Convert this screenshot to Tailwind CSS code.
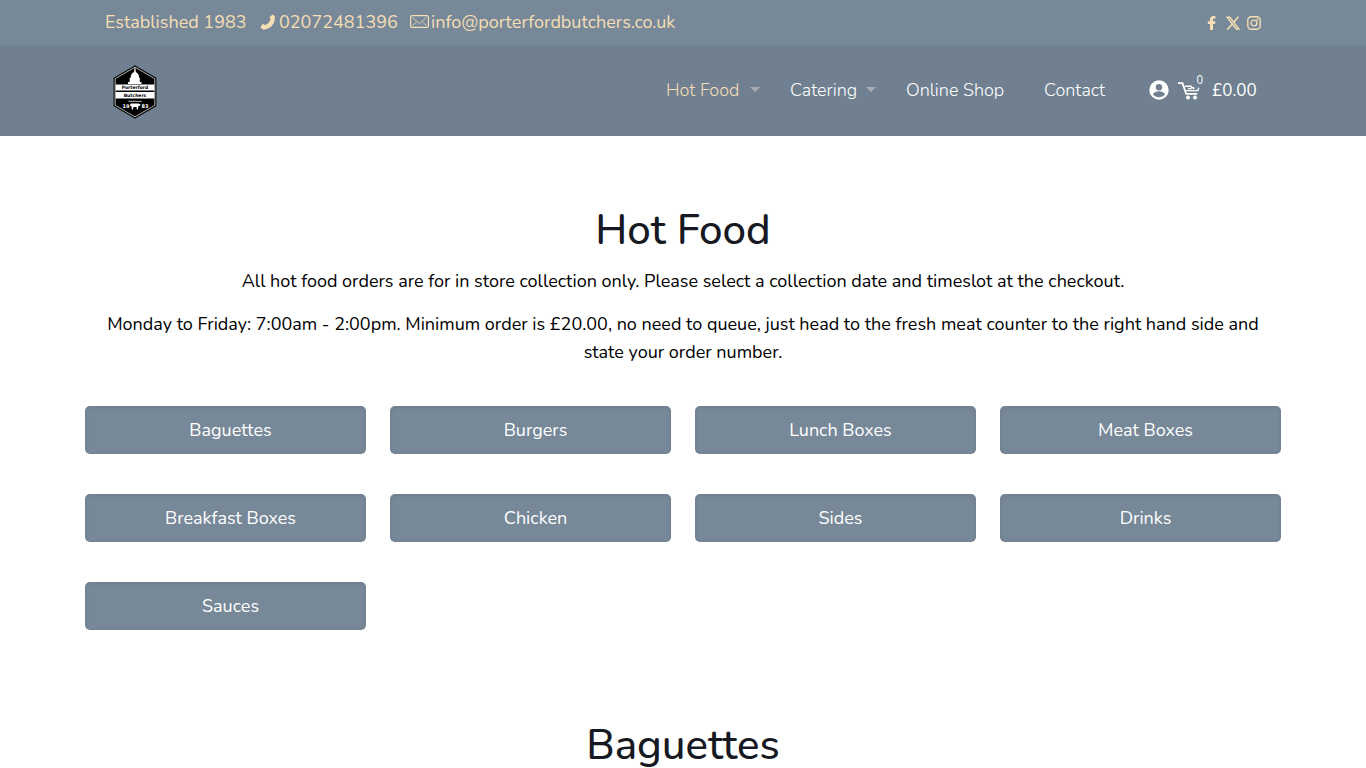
<!DOCTYPE html>
<html lang="en">
<head>
  <meta charset="UTF-8" />
  <meta name="viewport" content="width=device-width, initial-scale=1.0" />
  <title>Hot Food - Porterford Butchers</title>
  <script src="https://cdn.jsdelivr.net/npm/@tailwindcss/browser@4"></script>
</head>
<body class="bg-white font-['Nunito','Open_Sans',sans-serif] text-[18px] leading-7 text-black">
  <!-- Top bar -->
  <div class="bg-[#778899] text-[#f5deb3]">
    <div class="max-w-[1196px] mx-auto h-[45px] px-5 pb-[2px] flex items-center justify-between">
      <ul class="flex items-center gap-[10px]">
        <li class="w-[145px] whitespace-nowrap">Established 1983</li>
        <li>
          <a href="tel:02072481396" class="w-[140px] flex items-center gap-[3px] whitespace-nowrap">
            <svg class="w-4 h-4 shrink-0" viewBox="0 0 16 16" fill="currentColor"><path d="M12.3.8c.5-.3 1-.2 1.400.2l1.200 1.600c.3.500.2.900-.1 1.300.3 5.700-4.400 11-10.100 11.500-.4.400-1 .5-1.500.2L.9 14c-.4-.4-.5-.8-.2-1.300l1.500-2.200c.3-.4.7-.5 1.200-.3l1.600.9c2.600-.9 4.700-2.900 5.500-5.500l-.8-1.600c-.2-.5-.1-.9.300-1.200z"/></svg>
            <span>02072481396</span>
          </a>
        </li>
        <li>
          <a href="mailto:info@porterfordbutchers.co.uk" class="flex items-center gap-[2px] whitespace-nowrap">
            <svg class="w-[19px] h-[13px] shrink-0" viewBox="0 0 19 13" fill="none" stroke="currentColor"><rect x=".6" y=".6" width="17.800" height="11.800" rx="1.500" stroke-width="1.200"/><path d="M2.500 2.500L9.500 8.500l7-6M2.500 10.500L6.500 7M16.500 10.500L12.500 7" stroke-width=".8"/></svg>
            <span>info@porterfordbutchers.co.uk</span>
          </a>
        </li>
      </ul>
      <ul class="flex items-center gap-[7px] pt-[2px]">
        <li><a href="#" aria-label="Facebook"><svg class="w-[14px] h-[14px]" viewBox="0 0 14 14" fill="currentColor"><path d="M5 14V8H2.800V5.200H5V3.600C5 1.300 6.400.1 8.500.1c1 0 2 .1 2 .1v2.400H9.300c-1 0-1.300.5-1.300 1.200v1.400h2.500L10.100 8H8v6z"/></svg></a></li>
        <li><a href="#" aria-label="X"><svg class="w-[14px] h-[14px]" viewBox="0 0 14 14" fill="none" stroke="currentColor"><path d="M1.200 1.300h2.700l9 11.700h-2.700z" stroke-width="1.400"/><path d="M12.500 .8L7.900 6.100M6.200 8.200L1.300 13.600" stroke-width="1.600"/></svg></a></li>
        <li><a href="#" aria-label="Instagram"><svg class="w-[14px] h-[14px]" viewBox="0 0 14 14" fill="none" stroke="currentColor" stroke-width="1.400"><rect x=".8" y=".8" width="12.400" height="12.400" rx="3.500"/><circle cx="7" cy="7" r="2.900"/><circle cx="10.500" cy="3.500" r=".9" fill="currentColor" stroke="none"/></svg></a></li>
      </ul>
    </div>
  </div>

  <!-- Header -->
  <header class="bg-[#708090]">
    <div class="max-w-[1196px] mx-auto h-[91px] pl-7 pr-[25px] flex items-center justify-between">
      <a href="#" aria-label="Porterford Butchers" class="pt-[2px]">
        <svg class="w-11 h-[54px]" viewBox="0 0 44 54">
          <path d="M22 .8L43 13v28L22 53.200 1 41V13z" fill="#000" stroke="#111" stroke-width="1"/>
          <path d="M22 2.200L41.800 13.700v26.600L22 51.800 2.200 40.300V13.700z" fill="none" stroke="#ddd" stroke-width=".8"/>
          <path d="M21.600 3h.8l.4 4c2.200 1 3.300 3.300 3.500 6h.7v1.500h-.5l.5 2.500h1.500V19H15v-2h1.500l.5-2.500h-.5V13h1c.2-2.700 1.300-5 3.500-6z" fill="#fff"/>
          <path d="M2.600 19.500h38.800v6H2.600zM2.600 27h38.800v6.500H2.600z" fill="#fff"/>
          <path d="M17.500 38.500h8l2 .8-.5 1.500-1.500.2-.7 3.500h-1l-.3-2.500h-3l-.6 2.500h-1l-.4-3-1.500-1z" fill="#fff"/>
          <g font-family="DejaVu Sans, sans-serif" font-weight="bold" text-anchor="middle">
            <text x="22" y="24.300" font-size="4.500">Porterford</text>
            <text x="22" y="32" font-size="4.500">Butchers</text>
            <text x="22" y="36.500" font-size="2" fill="#fff">Established</text>
            <text x="13" y="43" font-size="5" fill="#fff">19</text>
            <text x="32" y="43" font-size="5" fill="#fff">83</text>
          </g>
        </svg>
      </a>
      <div class="flex items-center text-white">
        <nav class="font-light pb-[2px]">
          <ul class="flex items-center whitespace-nowrap">
            <li class="w-[124px]"><a href="#" class="flex items-center justify-between pr-[30px] text-[#f5deb3]">Hot Food
              <svg class="w-[10px] h-[5px]" viewBox="0 0 10 5" fill="#a9adb3"><path d="M0 0h10L5 5z"/></svg></a></li>
            <li class="w-[116px]"><a href="#" class="flex items-center justify-between pr-[30px]">Catering
              <svg class="w-[10px] h-[5px]" viewBox="0 0 10 5" fill="#a9adb3"><path d="M0 0h10L5 5z"/></svg></a></li>
            <li class="w-[138px]"><a href="#">Online Shop</a></li>
            <li class="w-[105px]"><a href="#">Contact</a></li>
          </ul>
        </nav>
        <a href="#" aria-label="Account" class="pb-[2px]">
          <svg class="w-5 h-5" viewBox="0 0 20 20"><circle cx="10" cy="10" r="9.700" fill="#fff"/><circle cx="10" cy="7.200" r="3.200" fill="#708090"/><path d="M3.900 14.200c1.300-2 3.500-2.900 6.100-2.900s4.800.9 6.100 2.900c-1.400 1.900-3.600 3-6.100 3s-4.700-1.100-6.100-3z" fill="#708090"/></svg>
        </a>
        <a href="#" class="ml-[9px] flex items-center gap-3 text-[17px]">
          <span class="relative">
            <svg class="w-[22px] h-[18px]" viewBox="0 0 22 18" fill="none" stroke="#fff"><path d="M0 1.200h4.500l3.700 10.600h11" stroke-width="1.800"/><path d="M7 4.300h6l1 1.500h2M8.300 8.600h11.500l1-2.800M10 6.600h3.500M15 7l1.500-1" stroke-width="1.400"/><circle cx="10" cy="15.500" r="1.900" fill="#fff" stroke="none"/><circle cx="17" cy="15.500" r="1.900" fill="#fff" stroke="none"/></svg>
            <span class="absolute -top-[7px] -right-[3px] text-[11px] leading-3">0</span>
          </span>
          <span class="w-[44px]">£0.00</span>
        </a>
      </div>
    </div>
  </header>

  <!-- Content -->
  <main class="max-w-[1196px] mx-auto">
    <section class="pt-[70px] text-center">
      <h1 class="text-[42px] leading-[50px] font-medium text-[#161922]">Hot Food</h1>
      <p class="mt-[11px]">All hot food orders are for in store collection only. Please select a collection date and timeslot at the checkout.</p>
      <p class="mt-[15px] px-3">Monday to Friday: 7:00am - 2:00pm. Minimum order is £20.00, no need to queue, just head to the fresh meat counter to the right hand side and state your order number.</p>
    </section>

    <div class="mt-10 grid grid-cols-4 gap-x-6 gap-y-10 text-center text-white">
      <a href="#baguettes" class="h-12 pl-[10px] flex items-center justify-center rounded-[5px] bg-[#778899] inset-shadow-[0_1px_4px_rgb(0_0_0/0.1)]">Baguettes</a>
      <a href="#burgers" class="h-12 pl-[10px] flex items-center justify-center rounded-[5px] bg-[#778899] inset-shadow-[0_1px_4px_rgb(0_0_0/0.1)]">Burgers</a>
      <a href="#lunch" class="h-12 pl-[10px] flex items-center justify-center rounded-[5px] bg-[#778899] inset-shadow-[0_1px_4px_rgb(0_0_0/0.1)]">Lunch Boxes</a>
      <a href="#meat" class="h-12 pl-[10px] flex items-center justify-center rounded-[5px] bg-[#778899] inset-shadow-[0_1px_4px_rgb(0_0_0/0.1)]">Meat Boxes</a>
      <a href="#breakfast" class="h-12 pl-[10px] flex items-center justify-center rounded-[5px] bg-[#778899] inset-shadow-[0_1px_4px_rgb(0_0_0/0.1)]">Breakfast Boxes</a>
      <a href="#chicken" class="h-12 pl-[10px] flex items-center justify-center rounded-[5px] bg-[#778899] inset-shadow-[0_1px_4px_rgb(0_0_0/0.1)]">Chicken</a>
      <a href="#sides" class="h-12 pl-[10px] flex items-center justify-center rounded-[5px] bg-[#778899] inset-shadow-[0_1px_4px_rgb(0_0_0/0.1)]">Sides</a>
      <a href="#drinks" class="h-12 pl-[10px] flex items-center justify-center rounded-[5px] bg-[#778899] inset-shadow-[0_1px_4px_rgb(0_0_0/0.1)]">Drinks</a>
      <a href="#sauces" class="h-12 pl-[10px] flex items-center justify-center rounded-[5px] bg-[#778899] inset-shadow-[0_1px_4px_rgb(0_0_0/0.1)]">Sauces</a>
    </div>

    <section id="baguettes" class="pt-[91px] text-center">
      <h2 class="text-[42px] leading-[50px] font-medium text-[#161922]">Baguettes</h2>
    </section>
  </main>
</body>
</html>
